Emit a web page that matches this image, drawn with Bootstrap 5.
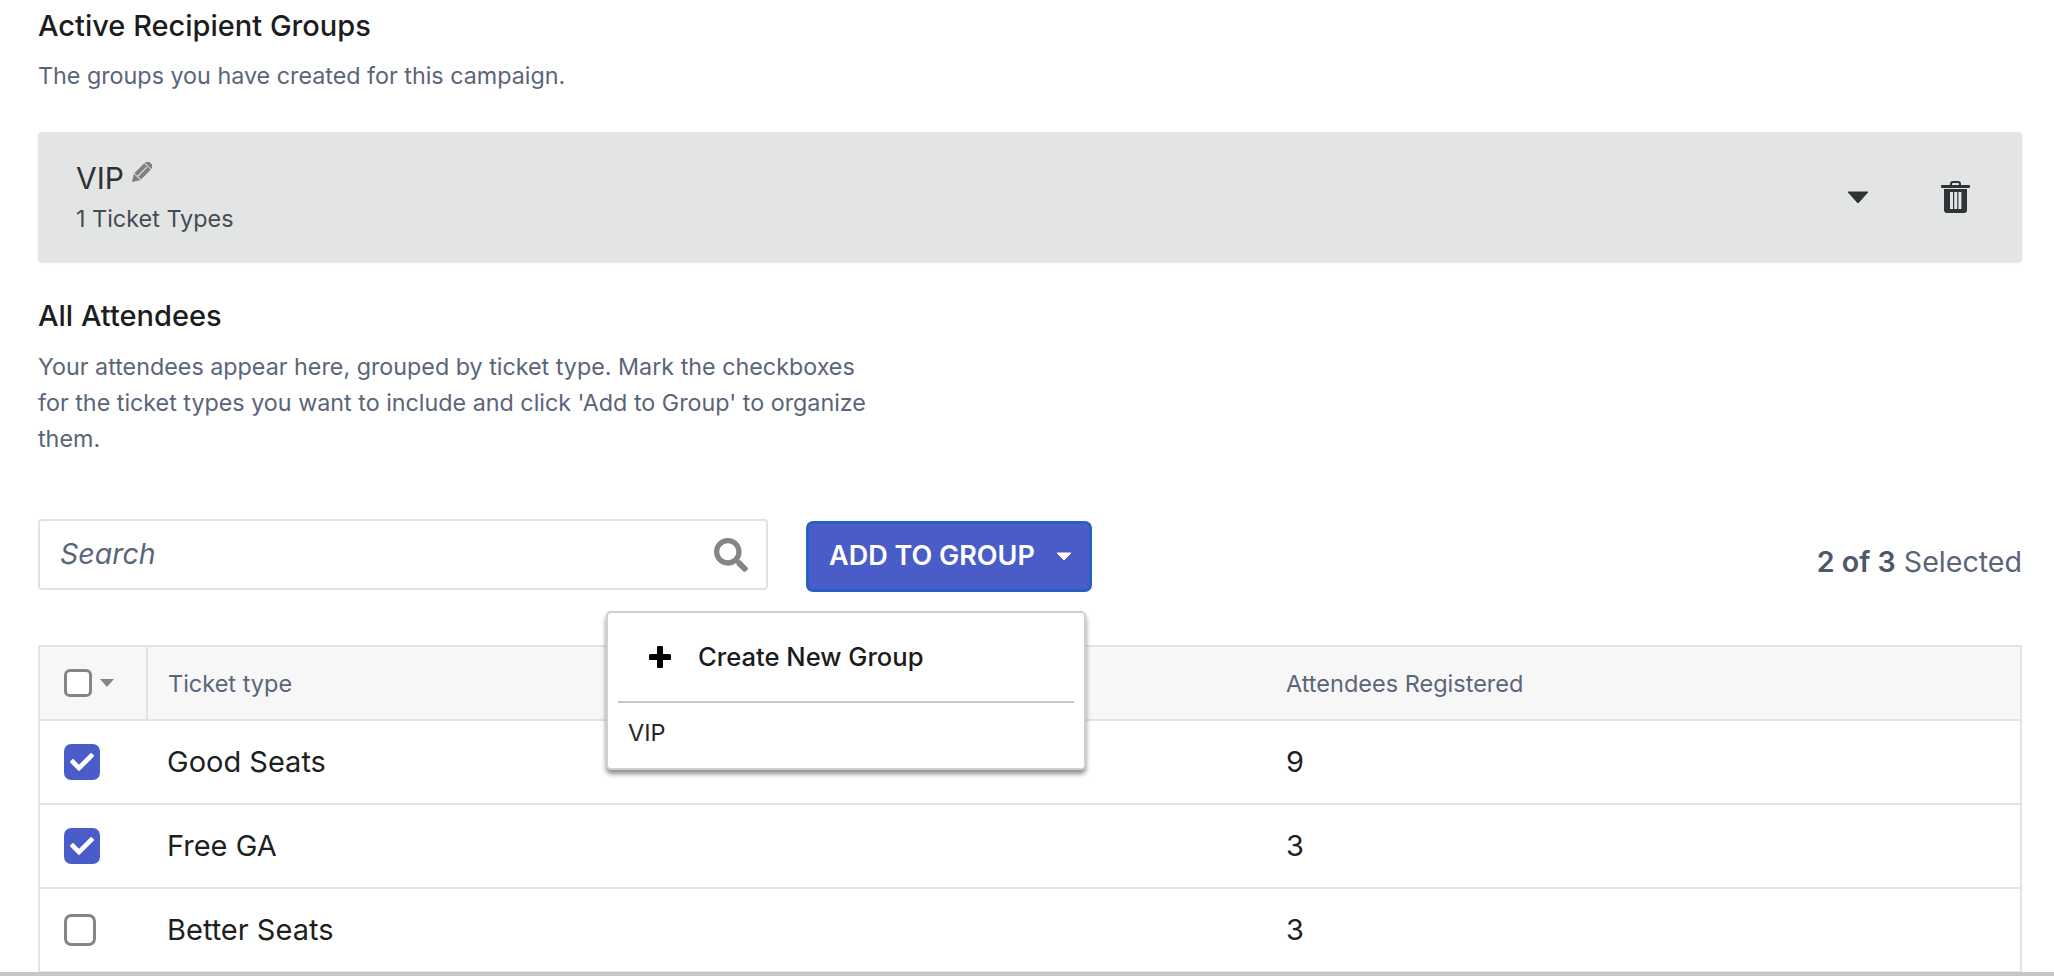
<!DOCTYPE html>
<html>

<head>
    <title>Recipient Groups</title>
    <link rel="stylesheet" href="https://cdn.jsdelivr.net/npm/bootstrap@5.3.0/dist/css/bootstrap.min.css">
    <style>
        html, body { height: 976px; overflow: hidden; }
        body { font-family: "Inter", "Liberation Sans", sans-serif; color: #1d1f21; background: #fff; }
        .page-wrap { padding: 0 32px 0 38px; height: 972px; overflow: hidden; position: relative; }
        .sec-title { font-size: 29px; line-height: 36px; font-weight: 500; margin: 0; color: #1c1d1f; }
        .sec-desc { font-size: 23.3px; line-height: 36px; color: #5a6579; margin: 0; }
        .first-title { padding-top: 8px; }
        .first-desc { margin-top: 14px; }
        .group-panel { height: 130px; margin-top: 38px; background: #e3e5e4; border-radius: 4px; box-shadow: 0 1px 2px rgba(0,0,0,.12); padding: 0 52px 0 38px; }
        .group-name { font-size: 30px; line-height: 40px; color: #2d3035; margin-top: -2px; }
        .group-count { font-size: 23.4px; line-height: 30px; color: #454c56; margin-top: 6px; }
        .attendee-title { margin-top: 36px; }
        .attendee-desc { width: 850px; margin-top: 15px; }
        .search-box { width: 730px; height: 71px; border: 2px solid #e2e2e2; border-radius: 4px; padding: 0 18px 0 20px; }
        .search-box input { border: 0; outline: 0; padding: 0; flex: 1; font-size: 28.5px; font-style: italic; background: transparent; font-family: inherit; }
        .search-box input::placeholder { color: #5a6579; opacity: 1; }
        .tool-row { margin-top: 62px; gap: 38px; }
        .add-btn { width: 286px; height: 71px; background: #4a5cc7; border: 3px solid #2560c8; border-radius: 7px; color: #fff; font-size: 27px; font-weight: 600; padding: 0 17px 0 20px; margin-top: 2px; white-space: nowrap; }
        .selected-count { font-size: 28.6px; color: #5a6579; margin-top: 22px; }
        .selected-count b { font-weight: 600; color: #4d586b; }
        .attendee-table { table-layout: fixed; width: 100%; margin: 53px 0 0; border-collapse: collapse; border: 2px solid #e4e4e4; }
        .attendee-table th, .attendee-table td { border-bottom: 2px solid #e4e4e4; padding: 0 20px; vertical-align: middle; }
        .attendee-table thead th { height: 74px; padding-top: 1px; background: #f7f7f7; font-size: 23.5px; font-weight: 400; color: #5a6579; box-shadow: none; }
        .attendee-table tbody td { height: 84px; font-size: 29px; color: #1d1f21; }
        .attendee-table .check-col { width: 108px; padding: 0 0 0 24px; }
        .attendee-table thead .check-col { border-right: 2px solid #e4e4e4; padding-top: 0; }
        .attendee-table .type-col { width: 1119px; }
        .tick-box { display: block; margin: 0; border-radius: 6px; border: 3px solid #858585; background: #fff; width: 32px; height: 32px; }
        .tick-box.is-small { width: 28px; height: 28px; }
        .tick-box:checked { width: 36px; height: 36px; border: 0; background-color: #4a5cc7; background-repeat: no-repeat; background-position: center; background-size: 24px 24px; background-image: url("data:image/svg+xml,%3Csvg xmlns='http://www.w3.org/2000/svg' viewBox='0 0 512 512'%3E%3Cpath fill='%23fff' d='M173.9 439.4l-166.4-166.4c-10-10-10-26.2 0-36.2l36.2-36.2c10-10 26.2-10 36.2 0L192 312.7 432.1 72.6c10-10 26.2-10 36.2 0l36.2 36.2c10 10 10 26.2 0 36.2l-294.4 294.4c-10 10-26.2 10-36.2 0z'/%3E%3C/svg%3E"); }
        .group-menu { position: absolute; left: 606px; top: 611px; width: 480px; height: 159px; margin: 0; padding: 0; display: block; border: 2px solid #d0d0d0; border-radius: 5px; background: #fff; box-shadow: 0 4px 5px rgba(0,0,0,.45); }
        .menu-create { height: 88px; padding: 0 0 0 41px; gap: 27px; font-size: 25.6px; font-weight: 500; color: #1b1c1e; }
        .menu-line { margin: 0 10px; border: 0; border-top: 2px solid #c9c9c9; opacity: 1; }
        .menu-vip { font-size: 23.5px; line-height: 30px; padding: 15px 0 0 20px; color: #24262a; }
        .bottom-line { height: 4px; background: #c4c6c7; }
        .trash-icon { margin-left: 72px; }
        .pencil-icon { margin-left: 6px; margin-top: 4px; }
    </style>
</head>

<body>
    <div class="page-wrap">
        <h2 class="sec-title first-title">Active Recipient Groups</h2>
        <p class="sec-desc first-desc">The groups you have created for this campaign.</p>

        <div class="group-panel d-flex align-items-center justify-content-between">
            <div>
                <div class="group-name d-flex">VIP
                    <svg class="pencil-icon" width="22" height="22" viewBox="0 0 24 24"><g transform="rotate(45 12 12)" fill="#7d7f81"><rect x="7" y="-3" width="10" height="4" rx="1"/><rect x="7" y="2" width="10" height="15"/><path d="M7 18h10l-5 8z"/><rect x="11.4" y="3" width="1.2" height="14" fill="#e3e5e4"/></g></svg>
                </div>
                <div class="group-count">1 Ticket Types</div>
            </div>
            <div class="d-flex align-items-center">
                <svg width="22" height="13" viewBox="0 0 22 13"><path d="M1 1h20l-10 11z" fill="#2f3237" stroke="#2f3237" stroke-linejoin="round"/></svg>
                <svg class="trash-icon" width="29" height="32" viewBox="0 0 29 32"><path d="M10 4V3a2 2 0 0 1 2-2h5a2 2 0 0 1 2 2v1" fill="none" stroke="#2f3237" stroke-width="2"/><rect x="0" y="4" width="29" height="3" rx="1" fill="#2f3237"/><path d="M3 8h23v21a3 3 0 0 1-3 3H6a3 3 0 0 1-3-3z" fill="#2f3237"/><path d="M9 11h3v17H9zM13.2 11h3v17h-3zM17.4 11h3v17h-3z" fill="#e3e5e4"/></svg>
            </div>
        </div>

        <h2 class="sec-title attendee-title">All Attendees</h2>
        <p class="sec-desc attendee-desc">Your attendees appear here, grouped by ticket type. Mark the checkboxes for the ticket types you want to include and click 'Add to Group' to organize them.</p>

        <div class="d-flex tool-row">
            <div class="search-box d-flex align-items-center">
                <input type="text" placeholder="Search">
                <svg width="34" height="34" viewBox="0 0 512 512"><path fill="#858585" d="M505 442.7L405.3 343c-4.5-4.5-10.6-7-17-7H372c27.6-35.3 44-79.7 44-128C416 93.1 322.9 0 208 0S0 93.1 0 208s93.1 208 208 208c48.3 0 92.7-16.4 128-44v16.3c0 6.4 2.5 12.5 7 17l99.7 99.7c9.4 9.4 24.6 9.4 33.9 0l28.3-28.3c9.4-9.4 9.4-24.6.1-34zM208 336c-70.7 0-128-57.2-128-128 0-70.7 57.2-128 128-128 70.7 0 128 57.2 128 128 0 70.7-57.2 128-128 128z"/></svg>
            </div>
            <button type="button" class="btn add-btn d-flex align-items-center justify-content-between">ADD TO GROUP
                <svg width="16" height="9" viewBox="0 0 16 9"><path d="M1 1h14l-7 7z" fill="#fff" stroke="#fff" stroke-linejoin="round"/></svg>
            </button>
            <div class="selected-count ms-auto"><b>2 of 3</b> Selected</div>
        </div>

        <table class="attendee-table">
            <thead>
                <tr>
                    <th class="check-col">
                        <div class="d-flex align-items-center gap-2">
                            <input class="form-check-input tick-box is-small" type="checkbox">
                            <svg width="14" height="8" viewBox="0 0 14 8"><path d="M0 0h14l-7 8z" fill="#858585"/></svg>
                        </div>
                    </th>
                    <th class="type-col">Ticket type</th>
                    <th>Attendees Registered</th>
                </tr>
            </thead>
            <tbody>
                <tr>
                    <td class="check-col"><input class="form-check-input tick-box" type="checkbox" checked></td>
                    <td>Good Seats</td>
                    <td>9</td>
                </tr>
                <tr>
                    <td class="check-col"><input class="form-check-input tick-box" type="checkbox" checked></td>
                    <td>Free GA</td>
                    <td>3</td>
                </tr>
                <tr>
                    <td class="check-col"><input class="form-check-input tick-box" type="checkbox"></td>
                    <td>Better Seats</td>
                    <td>3</td>
                </tr>
            </tbody>
        </table>

        <div class="dropdown-menu show group-menu">
            <div class="menu-create d-flex align-items-center">
                <svg width="22" height="22" viewBox="0 0 22 22"><path d="M11 2v18M2 11h18" stroke="#000" stroke-width="6" stroke-linecap="round"/></svg>
                <span>Create New Group</span>
            </div>
            <hr class="menu-line">
            <div class="menu-vip">VIP</div>
        </div>
    </div>
    <div class="bottom-line"></div>

    <script src="https://cdn.jsdelivr.net/npm/bootstrap@5.3.0/dist/js/bootstrap.bundle.min.js"></script>
</body>

</html>
